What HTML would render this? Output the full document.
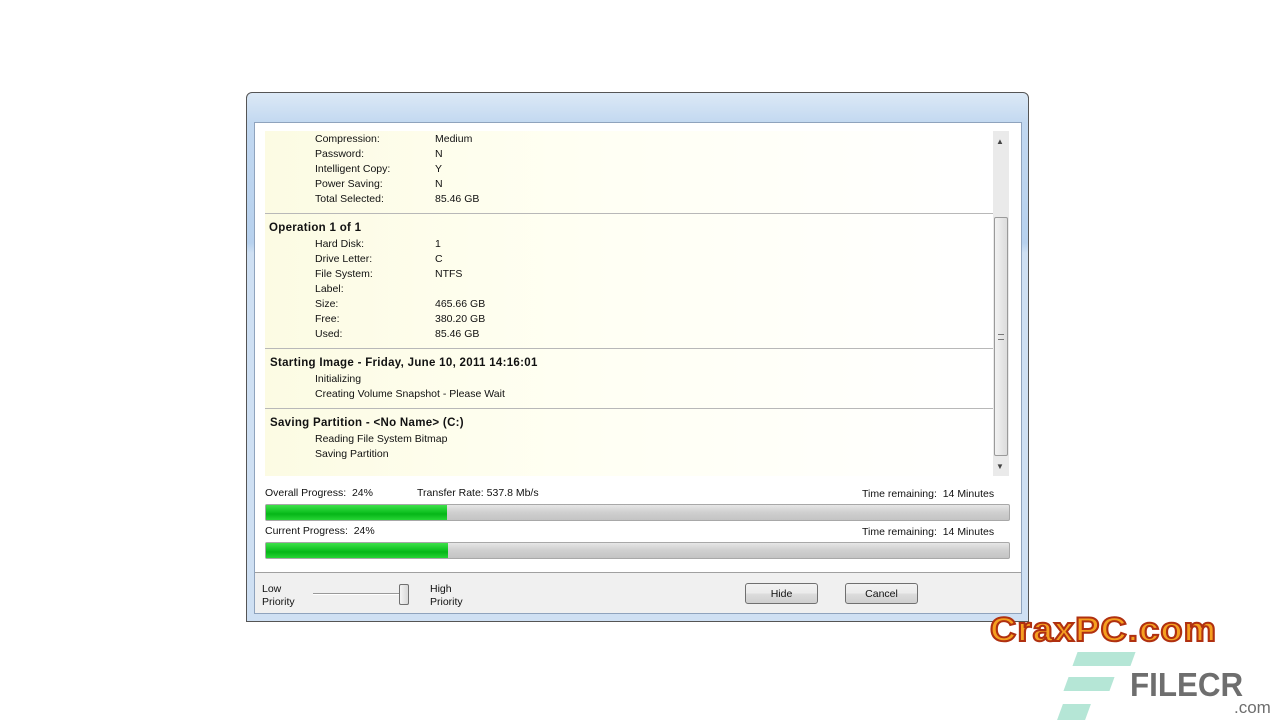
<!DOCTYPE html>
<html><head><style>
*{margin:0;padding:0;box-sizing:border-box}
body{width:1280px;height:720px;background:#fff;position:relative;overflow:hidden;font-family:"Liberation Sans",sans-serif;font-size:10.5px;color:#111}
.abs{position:absolute}
.win{left:246px;top:92px;width:783px;height:530px;border:1px solid #555;border-radius:6px 6px 0 0;background:linear-gradient(180deg,#dce9f6 0,#c2d8f0 30px,#b7d1ee 150px,#cfe0f3 160px,#cfe0f3 100%)}
.client{left:254px;top:122px;width:768px;height:492px;background:#fff;border:1px solid #8fa3bd}
.panel{left:265px;top:131px;width:728px;height:345px;background:linear-gradient(90deg,#fcfbe3 0,#fffff2 40%,#fff 100%)}
.t{position:absolute;white-space:nowrap;line-height:13px}
.b{font-weight:bold;font-size:11.5px;letter-spacing:0.3px}
.sep{position:absolute;left:265px;width:728px;height:1px;background:#b8b8b8}
.bar{position:absolute;left:265px;width:745px;height:17px;border:1px solid #a8a8a8;border-radius:2px;background:linear-gradient(180deg,#e6e6e6,#cfcfcf 50%,#c4c4c4)}
.fill{position:absolute;left:0;top:0;height:15px;background:linear-gradient(180deg,#3ee04a,#12c424 45%,#06b618 60%,#27d535)}
.btn{position:absolute;width:73px;height:21px;border:1px solid #707070;border-radius:3px;background:linear-gradient(180deg,#f2f2f2,#ebebeb 50%,#dddddd 51%,#cfcfcf);text-align:center;line-height:20px}
</style></head><body>
<div class="abs win"></div>
<div class="abs client"></div>
<div class="abs panel"></div>
<div class="abs" style="left:993px;top:131px;width:16px;height:345px;background:#eaeaea"></div>
<div class="abs" style="left:996px;top:137px;font-size:8px;color:#444">▲</div>
<div class="abs" style="left:996px;top:462px;font-size:8px;color:#444">▼</div>
<div class="abs" style="left:994px;top:217px;width:14px;height:239px;border:1px solid #9a9a9a;border-radius:2px;background:linear-gradient(90deg,#f2f2f2,#dcdcdc)"></div>
<div class="abs" style="left:998px;top:334px;width:6px;height:6px;border-top:1px solid #777;border-bottom:1px solid #777"></div>

<div class="t" style="left:315px;top:133px">Compression:</div><div class="t" style="left:435px;top:133px">Medium</div>
<div class="t" style="left:315px;top:148px">Password:</div><div class="t" style="left:435px;top:148px">N</div>
<div class="t" style="left:315px;top:163px">Intelligent Copy:</div><div class="t" style="left:435px;top:163px">Y</div>
<div class="t" style="left:315px;top:178px">Power Saving:</div><div class="t" style="left:435px;top:178px">N</div>
<div class="t" style="left:315px;top:193px">Total Selected:</div><div class="t" style="left:435px;top:193px">85.46 GB</div>
<div class="sep" style="top:213px"></div>
<div class="t b" style="left:269px;top:222px">Operation 1 of 1</div>
<div class="t" style="left:315px;top:238px">Hard Disk:</div><div class="t" style="left:435px;top:238px">1</div>
<div class="t" style="left:315px;top:253px">Drive Letter:</div><div class="t" style="left:435px;top:253px">C</div>
<div class="t" style="left:315px;top:268px">File System:</div><div class="t" style="left:435px;top:268px">NTFS</div>
<div class="t" style="left:315px;top:283px">Label:</div>
<div class="t" style="left:315px;top:298px">Size:</div><div class="t" style="left:435px;top:298px">465.66 GB</div>
<div class="t" style="left:315px;top:313px">Free:</div><div class="t" style="left:435px;top:313px">380.20 GB</div>
<div class="t" style="left:315px;top:328px">Used:</div><div class="t" style="left:435px;top:328px">85.46 GB</div>
<div class="sep" style="top:348px"></div>
<div class="t b" style="left:270px;top:357px">Starting Image - Friday, June 10, 2011 14:16:01</div>
<div class="t" style="left:315px;top:373px">Initializing</div>
<div class="t" style="left:315px;top:388px">Creating Volume Snapshot - Please Wait</div>
<div class="sep" style="top:408px"></div>
<div class="t b" style="left:270px;top:417px">Saving Partition - &lt;No Name&gt; (C:)</div>
<div class="t" style="left:315px;top:433px">Reading File System Bitmap</div>
<div class="t" style="left:315px;top:448px">Saving Partition</div>

<div class="t" style="left:265px;top:487px">Overall Progress:&nbsp; 24%</div>
<div class="t" style="left:417px;top:487px">Transfer Rate: 537.8 Mb/s</div>
<div class="t" style="left:862px;top:488px">Time remaining:&nbsp; 14 Minutes</div>
<div class="bar" style="top:504px"><div class="fill" style="width:181px"></div></div>
<div class="t" style="left:265px;top:525px">Current Progress:&nbsp; 24%</div>
<div class="t" style="left:862px;top:526px">Time remaining:&nbsp; 14 Minutes</div>
<div class="bar" style="top:542px"><div class="fill" style="width:182px"></div></div>

<div class="abs" style="left:255px;top:572px;width:766px;height:1px;background:#a0a0a0"></div>
<div class="abs" style="left:255px;top:573px;width:766px;height:40px;background:#f0f0f0"></div>
<div class="t" style="left:262px;top:583px">Low</div>
<div class="t" style="left:262px;top:596px">Priority</div>
<div class="t" style="left:430px;top:583px">High</div>
<div class="t" style="left:430px;top:596px">Priority</div>
<div class="abs" style="left:313px;top:593px;width:92px;height:2px;border-top:1px solid #999;border-bottom:1px solid #fff"></div>
<div class="abs" style="left:399px;top:584px;width:10px;height:21px;border:1px solid #707070;border-radius:2px;background:linear-gradient(90deg,#f4f4f4,#d8d8d8)"></div>
<div class="btn" style="left:745px;top:583px">Hide</div>
<div class="btn" style="left:845px;top:583px">Cancel</div>

<div class="t" style="left:990px;top:610px;font:bold 34px 'Liberation Sans',sans-serif;color:#f5a020;-webkit-text-stroke:2px #b03010;letter-spacing:1px;line-height:40px;transform:scaleX(1.07);transform-origin:left">CraxPC.com</div>
<div class="abs" style="left:1075px;top:652px;width:58px;height:14px;background:#b5e6d6;transform:skewX(-20deg)"></div>
<div class="abs" style="left:1066px;top:677px;width:46px;height:14px;background:#b5e6d6;transform:skewX(-20deg)"></div>
<div class="abs" style="left:1060px;top:704px;width:28px;height:16px;background:#b5e6d6;transform:skewX(-20deg)"></div>
<div class="t" style="left:1130px;top:666px;font:bold 33px 'Liberation Sans',sans-serif;color:#6e6e6e;line-height:38px;transform:scaleX(0.95);transform-origin:left">FILECR</div>
<div class="t" style="left:1234px;top:698px;font:17px 'Liberation Sans',sans-serif;color:#6e6e6e;line-height:20px">.com</div>
</body></html>
